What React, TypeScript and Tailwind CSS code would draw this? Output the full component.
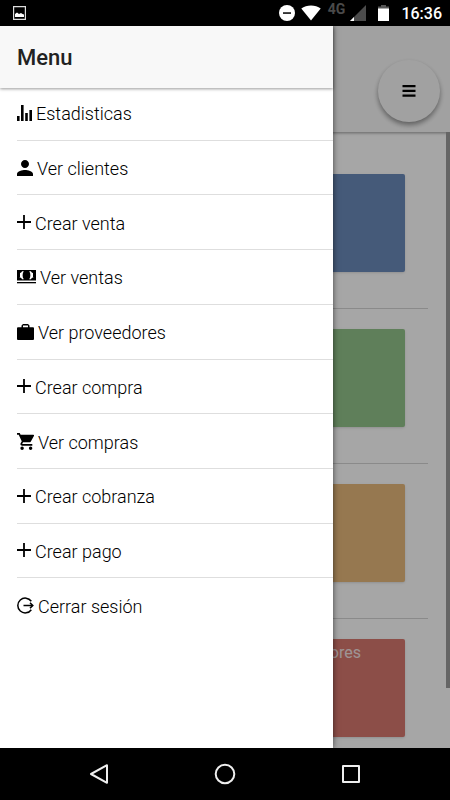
import React from 'react';

interface IconProps {
  viewBox: string;
  className: string;
  children: React.ReactNode;
}

const Icon: React.FC<IconProps> = ({ viewBox, className, children }) => (
  <svg viewBox={viewBox} className={`mb-[3px] shrink-0 ${className}`} fill="currentColor" aria-hidden="true">
    {children}
  </svg>
);

const StatsIcon = () => (
  <Icon viewBox="0 0 15 16" className="w-[15px] h-4">
    <path d="M0 11h2.600v5H0zM4 0h2.600v16H4zM8.200 8h2.600v8H8.200zM12.400 5H15v11h-2.600z" />
  </Icon>
);

const PersonIcon = () => (
  <Icon viewBox="64 64 384 384" className="w-4 h-4">
    <path d="M256 256c52.805 0 96-43.201 96-96s-43.195-96-96-96-96 43.201-96 96 43.195 96 96 96zm0 48c-63.598 0-192 32.402-192 96v48h384v-48c0-63.598-128.402-96-192-96z" />
  </Icon>
);

const AddIcon = () => (
  <Icon viewBox="0 0 14 14" className="w-[14px] h-[14px]">
    <path d="M6.1 0h1.800v6.100H14v1.800H7.900V14H6.100V7.900H0V6.100h6.100z" />
  </Icon>
);

const CashIcon = () => (
  <Icon viewBox="0 0 19 14" className="w-[19px] h-[14px]">
    <path d="M0 12h19v1.300H0z" />
    <path
      fillRule="evenodd"
      d="M0 0h19v10.400H0zM6.800 1.200H5C4.700 2.200 3.800 3 2 3.200v4C3.800 7.400 4.700 8.200 5 9.200h1.800C5.200 7 5.200 3.400 6.800 1.200zM12.200 1.200H14c.3 1 1.200 1.800 3 2v4c-1.800.2-2.700 1-3 2h-1.800c1.600-2.200 1.600-5.800 0-8z"
    />
    <path d="M1 3h2v4.400H1zM16 3h2v4.400h-2z" />
  </Icon>
);

const BriefcaseIcon = () => (
  <Icon viewBox="0 0 17 16" className="w-[17px] h-4">
    <path
      fillRule="evenodd"
      d="M6 0h5l1.500 1.500V3.200H16a1 1 0 0 1 1 1V15a1 1 0 0 1-1 1H1a1 1 0 0 1-1-1V4.200a1 1 0 0 1 1-1h3.500V1.500zM6 1.500v1.700h5V1.500z"
    />
  </Icon>
);

const CartIcon = () => (
  <Icon viewBox="1 2 20 20" className="w-[17px] h-[17px]">
    <path d="M7 18c-1.100 0-1.990.9-1.990 2S5.900 22 7 22s2-.9 2-2-.9-2-2-2zM1 2v2h2l3.600 7.590-1.350 2.450c-.16.28-.25.61-.25.96 0 1.100.9 2 2 2h12v-2H7.420c-.14 0-.25-.11-.25-.25l.03-.12.9-1.630h7.450c.75 0 1.410-.41 1.750-1.030l3.580-6.490A1 1 0 0 0 20 4H5.210l-.94-2H1zm16 16c-1.100 0-1.990.9-1.990 2s.89 2 1.990 2 2-.9 2-2-.9-2-2-2z" />
  </Icon>
);

const LogOutIcon = () => (
  <Icon viewBox="0 0 17 17" className="w-[17px] h-[17px]">
    <g fill="none" stroke="currentColor" strokeWidth="1.500">
      <path d="M14.300 4.300A7.400 7.400 0 1 0 14.300 12.700" />
      <path d="M6.500 8.500h9.300M13 5.800l2.800 2.700-2.800 2.700" />
    </g>
  </Icon>
);

const menuItems = [
  { label: 'Estadisticas', icon: <StatsIcon /> },
  { label: 'Ver clientes', icon: <PersonIcon /> },
  { label: 'Crear venta', icon: <AddIcon /> },
  { label: 'Ver ventas', icon: <CashIcon /> },
  { label: 'Ver proveedores', icon: <BriefcaseIcon /> },
  { label: 'Crear compra', icon: <AddIcon /> },
  { label: 'Ver compras', icon: <CartIcon /> },
  { label: 'Crear cobranza', icon: <AddIcon /> },
  { label: 'Crear pago', icon: <AddIcon /> },
  { label: 'Cerrar sesión', icon: <LogOutIcon /> },
];

const cards = [
  { color: 'bg-[#6a8aba]', label: '' },
  { color: 'bg-[#92c38a]', label: '' },
  { color: 'bg-[#e7b97b]', label: '' },
  { color: 'bg-[#d7786f]', label: 'Proveedores' },
];

const StatusBar = () => (
  <div className="flex h-[26px] shrink-0 items-center justify-between bg-black pl-[13px] pr-2 text-white">
    <svg viewBox="0 0 13 14" className="h-[14px] w-[13px]" aria-hidden="true">
      <path d="M.6.6h11.800v12.800H.6z" fill="none" stroke="#ddd" strokeWidth="1.200" />
      <path d="M2 11V8l2-1.500 2 1.500 2-1 1.500 1 1.500.5V11z" fill="#fff" />
    </svg>
    <div className="flex items-center">
      <svg viewBox="0 0 16 16" className="h-4 w-4" aria-hidden="true">
        <circle cx="8" cy="8" r="8" fill="#fff" />
        <path d="M4 7.300h8v1.500H4z" fill="#000" />
      </svg>
      <svg viewBox="0 0 20 16" className="ml-[6px] h-4 w-5" aria-hidden="true">
        <path d="M10 15.500.3 3.600C5.500-.6 14.500-.6 19.700 3.600z" fill="#fff" />
      </svg>
      <span className="ml-[7px] pb-2 text-sm leading-4 font-bold text-[#4a4a4a]">4G</span>
      <svg viewBox="0 0 16 16" className="ml-[5px] h-4 w-4" aria-hidden="true">
        <path d="M16 0v16H0z" fill="#4c4c4c" />
        <path d="M4 12v4H0z" fill="#fff" />
      </svg>
      <svg viewBox="0 0 11 16" className="ml-3 h-4 w-[11px]" aria-hidden="true">
        <path d="M3 0h5v1.500h3V4H0V1.500h3z" fill="#555" />
        <path d="M0 3.500h11V16H0z" fill="#fff" />
      </svg>
      <span className="ml-3 pt-px text-base leading-5 font-medium">16:36</span>
    </div>
  </div>
);

const Dashboard = () => (
  <div className="bg-white">
    <header className="flex h-[106px] justify-end bg-[#f8f8f8] pt-[34px] pr-[10px] shadow-[0_1px_3px_rgba(0,0,0,0.4)]">
      <button
        type="button"
        aria-label="Abrir menu"
        className="flex h-[62px] w-[62px] items-center justify-center rounded-full bg-[#f8f8f8] shadow-[0_3px_5px_rgba(0,0,0,0.4)]"
      >
        <svg viewBox="0 0 14 12" className="h-3 w-[14px]" aria-hidden="true">
          <path d="M.5 0h13v2.300H.5zM.5 4.700h13V7H.5zM.5 9.400h13v2.300H.5z" />
        </svg>
      </button>
    </header>
    <div className="flex items-start">
      <main className="flex-1 px-[18px] pt-[22px]">
        {cards.map((card) => (
          <section key={card.color} className="border-b border-[#d5d5d5] px-[23px] pt-5 pb-9 last:border-b-0 last:pb-[9px]">
            <div className={`h-[98px] rounded-xs pt-1 pr-11 text-right text-base leading-5 text-[#f4e4e4] shadow-sm ${card.color}`}>
              {card.label}
            </div>
          </section>
        ))}
      </main>
      <div className="h-[556px] w-1 bg-[#9c9c9c]" />
    </div>
  </div>
);

const SideMenu = () => (
  <aside className="absolute inset-y-0 left-0 w-[74%] bg-white shadow-[0_0_6px_rgba(0,0,0,0.6)]">
    <header className="relative flex h-[62px] items-center bg-[#f8f8f8] pt-px pl-[17px] shadow-[0_1px_3px_rgba(0,0,0,0.4)]">
      <h1 className="text-[22px] leading-7 font-medium text-[#222]">Menu</h1>
    </header>
    <nav className="-mt-0.5 pl-[17px]">
      <ul className="grid min-h-[547px] auto-rows-fr">
        {menuItems.map((item) => (
          <li key={item.label} className="border-b border-[#dedede] last:border-b-0">
            <a href="#" className="flex h-full items-center gap-1 pt-[3px] text-lg leading-6 font-light text-black">
              {item.icon}
              <span>{item.label}</span>
            </a>
          </li>
        ))}
      </ul>
    </nav>
  </aside>
);

const NavigationBar = () => (
  <div className="flex h-[52px] shrink-0 items-center justify-around bg-black px-9 text-[#eee]">
    <button type="button" aria-label="Atrás">
      <svg viewBox="0 0 20 20" className="h-5 w-5" fill="none" stroke="currentColor" strokeWidth="2" strokeLinejoin="round" aria-hidden="true">
        <path d="M18 1.200v17.600L2 10z" />
      </svg>
    </button>
    <button type="button" aria-label="Inicio">
      <svg viewBox="0 0 22 22" className="h-[22px] w-[22px]" fill="none" stroke="currentColor" strokeWidth="2" aria-hidden="true">
        <circle cx="11" cy="11" r="9.300" />
      </svg>
    </button>
    <button type="button" aria-label="Recientes">
      <svg viewBox="0 0 20 20" className="h-5 w-5" fill="none" stroke="currentColor" strokeWidth="2" strokeLinejoin="round" aria-hidden="true">
        <path d="M2 2h16v16H2z" />
      </svg>
    </button>
  </div>
);

export default function App() {
  return (
    <div className="flex min-h-screen flex-col font-[Roboto,sans-serif]">
      <StatusBar />
      <div className="relative flex-1 overflow-hidden">
        <Dashboard />
        <div className="absolute inset-0 bg-black/35" />
        <SideMenu />
      </div>
      <NavigationBar />
    </div>
  );
}
